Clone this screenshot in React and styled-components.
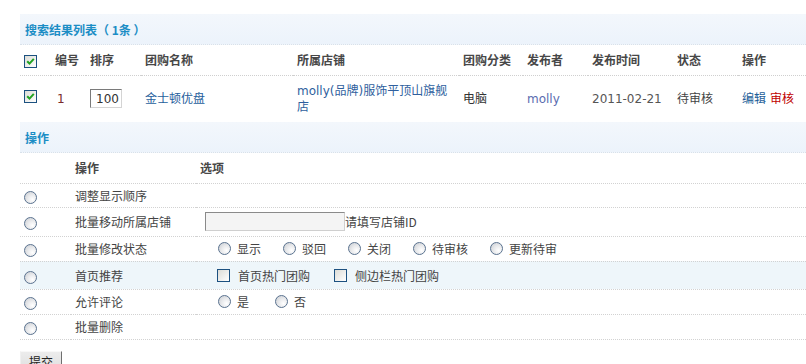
import React from 'react';
import styled, { createGlobalStyle } from 'styled-components';

const Global = createGlobalStyle`
  html, body { margin: 0; padding: 0; background: #fff; }
  body {
    font-family: "DejaVu Sans", "Noto Sans CJK SC", sans-serif;
    font-size: 12px;
    color: #333;
  }
  * { box-sizing: border-box; }
`;

const Page = styled.div`
  padding: 14px 0 0 20px;
  width: 806px;
  overflow: hidden;
`;

const Band = styled.div`
  height: 31px;
  display: flex;
  align-items: center;
  padding-left: 5px;
  background: linear-gradient(#f3f7fc, #ecf3fb);
  border-bottom: 1px dotted #d8e1ea;
  color: #1b8dc5;
  font-weight: bold;
  font-family: "Noto Sans CJK SC", "DejaVu Sans", sans-serif;
  font-size: 12px;
  white-space: pre;
`;

const ListTable = styled.table`
  width: 786px;
  border-collapse: collapse;
  table-layout: fixed;
`;

const HeadCell = styled.th`
  height: 30px;
  padding: 0 0 0 4px;
  text-align: left;
  vertical-align: middle;
  font-weight: bold;
  color: #474747;
  font-family: "Noto Sans CJK SC", "DejaVu Sans", sans-serif;
  border-bottom: 1px dotted #cfcfcf;
`;

const Cell = styled.td`
  height: 47px;
  padding: 0 ${p => p.$pr || 0}px 0 ${p => p.$pl ?? 4}px;
  line-height: 16px;
  vertical-align: middle;
  color: ${p => p.$color || '#333'};
`;

const Link = styled.a`
  color: ${p => p.$tone || '#26609c'};
  text-decoration: none;
  margin-right: ${p => p.$gap || 0}px;
`;

const SortInput = styled.input`
  width: 32px;
  height: 19px;
  padding: 0 0 0 5px;
  margin: 0;
  font: 12px "DejaVu Sans", sans-serif;
  color: #333;
  background: #fff;
  border: 1px solid;
  border-color: #7a7a7a #d4d4d4 #d4d4d4 #7a7a7a;
  vertical-align: middle;
`;

const TextInput = styled.input`
  width: 140px;
  height: 19px;
  margin: 0 0 0 5px;
  padding: 0 3px;
  font: 12px "DejaVu Sans", sans-serif;
  background: #f4f4f4;
  border: 1px solid;
  border-color: #8a8a8a #cfcfcf #cfcfcf #8a8a8a;
  vertical-align: middle;
`;

const Box = styled.span`
  display: inline-flex;
  align-items: center;
  justify-content: center;
  width: 13px;
  height: 13px;
  border: 1px solid #1c5180;
  background: linear-gradient(135deg, #dcdcd6, #ffffff);
  vertical-align: middle;
  margin-top: ${p => p.$mt || 0}px;
`;

const Radio = styled.span`
  display: inline-block;
  width: 13px;
  height: 13px;
  border-radius: 50%;
  border: 1px solid #5b7390;
  background: radial-gradient(circle at 68% 68%, #ffffff 0%, #e9eaec 45%, #c6cad0 100%);
  vertical-align: middle;
`;

const CheckBox = ({ checked, mt }) => (
  <Box $mt={mt}>
    {checked && (
      <svg width="9" height="9" viewBox="0 0 9 9">
        <path d="M1.2 4.2 L3.5 6.6 L7.8 1.8" stroke="#22a322" strokeWidth="2" fill="none" />
      </svg>
    )}
  </Box>
);

const OpsTable = styled.table`
  width: 786px;
  border-collapse: collapse;
  table-layout: fixed;
`;

const OpsRow = styled.tr`
  background: ${p => (p.$hl ? '#eef6fa' : 'transparent')};
  & > td, & > th {
    height: ${p => p.$h || 25}px;
    border-bottom: 1px dotted #d2d2d2;
  }
`;

const OpsHead = styled.th`
  padding: 0 0 0 4px;
  text-align: left;
  vertical-align: middle;
  font-weight: bold;
  color: #474747;
  font-family: "Noto Sans CJK SC", "DejaVu Sans", sans-serif;
`;

const OpsCell = styled.td`
  padding: 0 0 0 4px;
  vertical-align: middle;
  color: #444;
  font-family: "Noto Sans CJK SC", "DejaVu Sans", sans-serif;
  white-space: nowrap;
`;

const Options = styled.div`
  display: flex;
  align-items: center;
  padding-left: ${p => p.$pl || 0}px;
`;

const Option = styled.label`
  display: inline-flex;
  align-items: center;
  gap: ${p => p.$gap || 6}px;
  margin-right: ${p => p.$mr || 22}px;
  color: #444;
  & > span { flex: none; }
`;

const Hint = styled.span`
  color: #444;
`;

const Submit = styled.button`
  margin-top: 11px;
  width: 42px;
  height: 22px;
  padding: 0;
  font: 12px "Noto Sans CJK SC", sans-serif;
  color: #222;
  background: linear-gradient(#ececec, #dedede);
  border: 1px solid;
  border-color: #f8f8f8 #6f6f6f #6f6f6f #f0f0f0;
`;

const cols = [31, 35, 55, 152, 166, 64, 65, 85, 65, 68];
const heads = ['', '编号', '排序', '团购名称', '所属店铺', '团购分类', '发布者', '发布时间', '状态', '操作'];

export default function App() {
  return (
    <>
      <Global />
      <Page>
        <Band>搜索结果列表（ 1条 ）</Band>
        <ListTable>
          <colgroup>
            {cols.map((w, i) => <col key={i} style={{ width: w }} />)}
          </colgroup>
          <thead>
            <tr>
              {heads.map((h, i) => (
                <HeadCell key={i}>{i === 0 ? <CheckBox checked /> : h}</HeadCell>
              ))}
            </tr>
          </thead>
          <tbody>
            <tr>
              <Cell><CheckBox checked mt={-6} /></Cell>
              <Cell $color="#7a2b2b" $pl={6}>1</Cell>
              <Cell><SortInput defaultValue="100" /></Cell>
              <Cell><Link>金士顿优盘</Link></Cell>
              <Cell $pr={7}><Link $tone="#2f5f9e">molly(品牌)服饰平顶山旗舰店</Link></Cell>
              <Cell>电脑</Cell>
              <Cell><Link $tone="#5a6cb0">molly</Link></Cell>
              <Cell $color="#555">2011-02-21</Cell>
              <Cell $color="#444">待审核</Cell>
              <Cell>
                <Link $tone="#1f5f99" $gap={4}>编辑</Link>
                <Link $tone="#c00000">审核</Link>
              </Cell>
            </tr>
          </tbody>
        </ListTable>

        <Band>操作</Band>
        <OpsTable>
          <colgroup>
            <col style={{ width: 51 }} />
            <col style={{ width: 125 }} />
            <col />
          </colgroup>
          <thead>
            <OpsRow $h={30}>
              <OpsHead />
              <OpsHead>操作</OpsHead>
              <OpsHead>选项</OpsHead>
            </OpsRow>
          </thead>
          <tbody>
            <OpsRow $h={24}>
              <OpsCell><Radio /></OpsCell>
              <OpsCell>调整显示顺序</OpsCell>
              <OpsCell />
            </OpsRow>
            <OpsRow $h={29}>
              <OpsCell><Radio /></OpsCell>
              <OpsCell>批量移动所属店铺</OpsCell>
              <OpsCell>
                <Options>
                  <TextInput />
                  <Hint>请填写店铺ID</Hint>
                </Options>
              </OpsCell>
            </OpsRow>
            <OpsRow $h={25}>
              <OpsCell><Radio /></OpsCell>
              <OpsCell>批量修改状态</OpsCell>
              <OpsCell>
                <Options $pl={18}>
                  {['显示', '驳回', '关闭', '待审核', '更新待审'].map(t => (
                    <Option key={t}><Radio />{t}</Option>
                  ))}
                </Options>
              </OpsCell>
            </OpsRow>
            <OpsRow $h={28} $hl>
              <OpsCell><Radio /></OpsCell>
              <OpsCell>首页推荐</OpsCell>
              <OpsCell>
                <Options $pl={17}>
                  <Option $mr={24} $gap={8}><CheckBox />首页热门团购</Option>
                  <Option $gap={8}><CheckBox />侧边栏热门团购</Option>
                </Options>
              </OpsCell>
            </OpsRow>
            <OpsRow $h={25}>
              <OpsCell><Radio /></OpsCell>
              <OpsCell>允许评论</OpsCell>
              <OpsCell>
                <Options $pl={18}>
                  <Option $mr={26}><Radio />是</Option>
                  <Option><Radio />否</Option>
                </Options>
              </OpsCell>
            </OpsRow>
            <OpsRow $h={25}>
              <OpsCell><Radio /></OpsCell>
              <OpsCell>批量删除</OpsCell>
              <OpsCell />
            </OpsRow>
          </tbody>
        </OpsTable>
        <Submit>提交</Submit>
      </Page>
    </>
  );
}
